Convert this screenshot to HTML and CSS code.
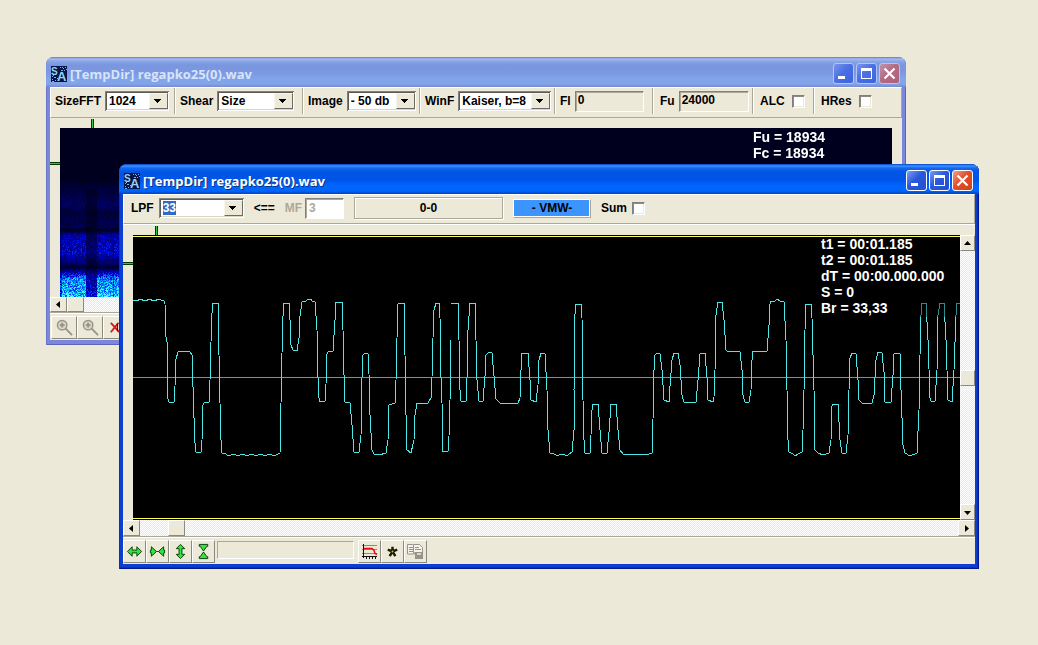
FILE: index.html
```
<!DOCTYPE html>
<html lang="en">
<head>
    <meta charset="UTF-8">
    <title>regapko25(0).wav</title>
    <link rel="stylesheet" href="styles.css">
</head>
<body>
    <svg class="defs" width="0" height="0" aria-hidden="true">
        <symbol id="logo" viewBox="0 0 16 16">
            <rect width="16" height="16" fill="#04164c"/>
            <path d="M9 1h1M12 2h1M14 1h1M10 4h2M13 4h1M1 10h1M3 11h2M1 13h1M4 14h1M6 12h1M1 15h2M11 1h1M15 3h1M2 9h1" transform="translate(0 .5)" stroke="#7fb3d8"/>
            <text x="0" y="9" class="logo-letter">S</text>
            <text x="6" y="15" class="logo-letter big">A</text>
        </symbol>
        <symbol id="min" viewBox="0 0 21 21"><path d="M5 13h7v3H5z" fill="#fff"/></symbol>
        <symbol id="max" viewBox="0 0 21 21"><path d="M5 5h11v11H5zM6 8v7h9V8z" fill="#fff" fill-rule="evenodd"/></symbol>
        <symbol id="close" viewBox="0 0 21 21"><path d="M5.500 5.500l10 10M15.500 5.500l-10 10" stroke="#fff" stroke-width="2.200"/></symbol>
    </svg>

    <div class="desktop">
        <div class="window spectrum inactive">
            <div class="titlebar">
                <svg class="logo"><use href="#logo"/></svg>
                <h1>[TempDir] regapko25(0).wav</h1>
                <button aria-label="Minimize"><svg><use href="#min"/></svg></button>
                <button aria-label="Maximize"><svg><use href="#max"/></svg></button>
                <button class="close" aria-label="Close"><svg><use href="#close"/></svg></button>
            </div>
            <div class="content">
                <div class="toolbar groups">
                    <div class="group">
                        <label for="sizefft">SizeFFT</label>
                        <span class="combo"><select id="sizefft"><option>1024</option></select></span>
                    </div>
                    <div class="group">
                        <label for="shear">Shear</label>
                        <span class="combo"><select id="shear"><option>Size</option></select></span>
                    </div>
                    <div class="group">
                        <label for="image">Image</label>
                        <span class="combo"><select id="image"><option>- 50 db</option></select></span>
                    </div>
                    <div class="group">
                        <label for="winf">WinF</label>
                        <span class="combo"><select id="winf"><option>Kaiser, b=8</option></select></span>
                    </div>
                    <div class="group">
                        <label for="fl">Fl</label>
                        <input type="text" class="field" id="fl" value="0">
                    </div>
                    <div class="group">
                        <label for="fu">Fu</label>
                        <input type="text" class="field" id="fu" value="24000">
                    </div>
                    <div class="group">
                        <label for="alc">ALC</label>
                        <input type="checkbox" id="alc">
                    </div>
                    <div class="group">
                        <label for="hres">HRes</label>
                        <input type="checkbox" id="hres">
                    </div>
                </div>
                <div class="view">
                    <div class="ruler-top"></div>
                    <div class="ruler-left"></div>
                    <div class="plot">
                        <canvas id="spectrogram"></canvas>
                        <div class="readout">
                            <p>Fu = 18934</p>
                            <p>Fc = 18934</p>
                        </div>
                    </div>
                </div>
                <div class="scroll horizontal">
                    <button aria-label="Scroll left"><svg viewBox="0 0 7 7"><path d="M5 0v7L1 3.500z"/></svg></button>
                    <span class="thumb"></span>
                </div>
                <div class="tools">
                    <button aria-label="Zoom in">
                        <svg viewBox="0 0 18 18"><circle cx="6.500" cy="6.500" r="5" fill="#d8d5c6" stroke="#96938a" stroke-width="1.500"/><path d="M4 6.500h5M6.500 4v5" stroke="#96938a" stroke-width="2"/><path d="M10 10l7 7" stroke="#96938a" stroke-width="2"/></svg>
                    </button>
                    <button aria-label="Zoom out">
                        <svg viewBox="0 0 18 18"><circle cx="6.500" cy="6.500" r="5" fill="#d8d5c6" stroke="#96938a" stroke-width="1.500"/><path d="M4 6.500h5M6.500 4v5" stroke="#96938a" stroke-width="2"/><path d="M10 10l7 7" stroke="#96938a" stroke-width="2"/></svg>
                    </button>
                    <button aria-label="Clear">
                        <svg viewBox="0 0 18 18"><path d="M3 4l9 10M11 4l-8 10" stroke="#d81818" stroke-width="2"/><path d="M10 5v8" stroke="#101010" stroke-width="1"/></svg>
                    </button>
                </div>
            </div>
        </div>

        <div class="window wave">
            <div class="titlebar">
                <svg class="logo"><use href="#logo"/></svg>
                <h1>[TempDir] regapko25(0).wav</h1>
                <button aria-label="Minimize"><svg><use href="#min"/></svg></button>
                <button aria-label="Maximize"><svg><use href="#max"/></svg></button>
                <button class="close" aria-label="Close"><svg><use href="#close"/></svg></button>
            </div>
            <div class="content">
                <div class="toolbar">
                    <div class="pair">
                        <label for="lpf">LPF</label>
                        <span class="combo lpf"><input type="text" id="lpf" value="33"></span>
                    </div>
                    <span>&lt;==</span>
                    <div class="pair mf">
                        <label for="mf">MF</label>
                        <input type="text" class="field" id="mf" value="3" disabled>
                    </div>
                    <output class="range">0-0</output>
                    <button class="vmw">- VMW-</button>
                    <div class="pair">
                        <label for="sum">Sum</label>
                        <input type="checkbox" id="sum">
                    </div>
                </div>
                <div class="view">
                    <div class="ruler-top"></div>
                    <div class="ruler-left"></div>
                    <div class="plot">
                        <svg class="signal" viewBox="133 235 827 285" preserveAspectRatio="none" shape-rendering="crispEdges">
                            <path d="M133 236.500h827M133 518.500h827" stroke="#ffff55"/>
                            <path d="M133 377.500h827" stroke="#8c8c84"/>
                            <polyline class="trace" points="133,300.500 138,300.500 139,299.500 142,299.500 143,300.500 147,300.500 148,299.500 151,299.500 152,300.500 156,300.500 157,299.500 160,299.500 162,300.500 164,301 165,304 165.500,335 167,342 167,375 168,399 169,402 174,402 175,386 176,359 178,352 181,351.500 190,352 192,355 193,387 194,418 195,443 196,452 201,452 202,440 203,405 204,403 209,402 210,380 211,342 212,313 213,303 218,303 219,355 220,403 221,440 222,453 226,454 227,455 231,455 232,454 235,454 236,455 240,455 241,454 244,454 245,455 249,455 250,454 253,454 254,455 258,455 259,454 262,454 263,455 267,455 268,454 271,454 272,455 276,455 278,454 280,453 281,403 282,353 283,316 284,303 289,303 290,320 291,345 293,350 297,351 299,338 300,316 302,302 306,301 308,299.500 311,299.500 312,301 315,302 317,330 318,378 319,398 320,402 325,401 326,384 327,354 328,352 333,351 335,320 336,302 342,302 343,330 344,375 345,402 350,403 352,425 354,452 359,452 361,435 362,378 363,355 365,353 368,354 369,374 370,415 372,450 374,454 379,455 386,453 388,440 389,405 395,403 396,380 397,338 398,304 404,303 405,355 406,415 407,450 411,453 414,440 415,415 417,403 428,403 431,398 432,377 433,338 434,310 436,303 439,303 440,318 441,378 442,403 443,451 448,451 449,436 450,400 451,340 451,304 458,303 459,340 460,390 461,401 466,401 467,378 468,330 470,303 475,303 476,340 477,380 479,401 483,401 485,376 486,355 489,352 492,353 494,376 496,399 500,403 518,403 520,398 521,370 522,353 528,353 530,380 531,400 536,402 538,385 539,360 541,353 545,354 547,390 548,430 550,453 554,454 556,455 559,455 560,454 564,454 565,455 568,455 569,454 572,452 574,430 574,390 575,314 576,304 581,304 582,318 583,400 584,440 585,453 590,453 591,435 592,410 593,404 598,404 600,430 602,453 607,453 609,432 611,404 616,404 618,430 620,450 623,454 626,455 630,454 636,455 640,454 646,455 652,453 653,419 654,370 655,355 657,353 660,354 662,370 664,400 669,402 670,386 672,360 674,353 678,353 680,365 682,395 684,402 690,403 696,402 698,380 700,354 705,353 707,378 708,400 713,402 714,397 715,370 716,315 718,302 722,302 724,320 726,350 727,351 740,352 742,370 743,395 745,402 749,402 751,390 752,360 753,351 767,351 769,325 770,304 771,301 775,301 777,299 780,301 784,302 786,340 787,390 788,440 789,452 793,454 795,456 798,454 802,452 803,430 804,390 805,330 806,304 811,304 812,318 814,390 815,450 818,453 823,455 829,453 831,440 832,406 833,404 838,404 840,440 842,453 846,453 848,435 849,390 850,358 852,353 856,354 858,380 859,400 862,403 872,403 874,395 876,360 878,352 882,353 884,372 885,402 891,402 893,375 894,354 900,353 901,390 903,445 905,453 910,456 917,453 919,410 920,355 921,315 922,303 926,303 928,340 930,398 931,401 935,401 937,370 938,315 940,303 944,303 946,340 948,400 952,402 954,370 956,315 957,303 960,303"/>
                            <rect x="917" y="240" width="43" height="77" opacity=".4"/>
                        </svg>
                        <div class="readout">
                            <p>t1 = 00:01.185</p>
                            <p>t2 = 00:01.185</p>
                            <p>dT = 00:00.000.000</p>
                            <p>S = 0</p>
                            <p>Br = 33,33</p>
                        </div>
                    </div>
                    <div class="scroll vertical">
                        <button aria-label="Scroll up"><svg viewBox="0 0 7 7"><path d="M0 5h7L3.500 1z"/></svg></button>
                        <span class="thumb"></span>
                        <button aria-label="Scroll down"><svg viewBox="0 0 7 7"><path d="M0 2h7L3.500 6z"/></svg></button>
                    </div>
                </div>
                <div class="scroll horizontal">
                    <button aria-label="Scroll left"><svg viewBox="0 0 7 7"><path d="M5 0v7L1 3.500z"/></svg></button>
                    <span class="thumb"></span>
                    <button aria-label="Scroll right"><svg viewBox="0 0 7 7"><path d="M2 0v7L6 3.500z"/></svg></button>
                </div>
                <div class="tools">
                    <button aria-label="Expand horizontally">
                        <svg viewBox="0 0 18 18" class="arrow"><path d="M1.500 9l5-5v3.500h5V4l5 5-5 5v-3.500h-5V14z"/></svg>
                    </button>
                    <button aria-label="Shrink horizontally">
                        <svg viewBox="0 0 18 18" class="arrow"><path d="M1.500 7.500h1V4l5.500 5-5.500 5v-3.500h-1zM16.500 7.500h-1V4L10 9l5.500 5v-3.500h1z"/><path d="M8 9h2"/></svg>
                    </button>
                    <button aria-label="Expand vertically">
                        <svg viewBox="0 0 18 18" class="arrow"><path d="M9 1.500l4.500 4.500h-3v6h3L9 16.500 4.500 12h3V6h-3z"/></svg>
                    </button>
                    <button aria-label="Shrink vertically">
                        <svg viewBox="0 0 18 18" class="arrow"><path d="M4.500 1.500h9v2h-1L9 8.500l-3.500-5h-1zM4.500 16.500h9v-2h-1L9 9.500l-3.500 5h-1z"/></svg>
                    </button>
                    <output class="status"></output>
                    <button aria-label="Filter response">
                        <svg viewBox="0 0 17 17"><path d="M1 2.500h15M1 6.500h15M1 10.500h15" stroke="#8c8a80"/><path d="M2.500 1v14M1 13.500h15M5.500 14v2M8.500 14v2M11.500 14v2M14.500 14v2" stroke="#111"/><path d="M3 5.500h8l2 2 1 3 2 1" fill="none" stroke="#e01010" stroke-width="1.500"/></svg>
                    </button>
                    <button aria-label="Mark">
                        <svg viewBox="0 0 18 18"><path d="M9 9V4M9 9l5-2M9 9l3 5M9 9l-3 5M9 9L4 7" stroke="#1a1a08" stroke-width="2.600"/><circle cx="9" cy="9" r="1" fill="#d0c000"/></svg>
                    </button>
                    <button aria-label="Copy" disabled>
                        <svg viewBox="0 0 17 17"><path d="M.5 1.500h5l2 2V11h-7z" fill="#f6f4ea" stroke="#96938a"/><path d="M6.500 1.500h6l3 3V10h-9z" fill="#f6f4ea" stroke="#96938a"/><path d="M2 4.500h4M2 6.500h4M2 8.500h4M8 4.500h4M8 6.500h6" stroke="#96938a"/><path d="M8 9h8v7H8z" fill="#96938a"/><path d="M10 10h4v2h-4z" fill="#d8d5c6"/></svg>
                    </button>
                </div>
            </div>
        </div>
    </div>
    <script src="script.js"></script>
</body>
</html>
```
FILE: styles.css
```
* {
    box-sizing: border-box;
}
body {
    margin: 0;
    background-color: #ece9d8;
    font: bold 12px/14px "Liberation Sans", Arial, sans-serif;
    color: #000;
}
button, input, select {
    font: inherit;
    color: inherit;
    margin: 0;
    padding: 0;
    border: 0;
    border-radius: 0;
    outline: 0;
}
.defs {
    position: absolute;
}
.desktop {
    position: relative;
    min-height: 100vh;
    min-width: 960px;
}

/* windows */
.window {
    position: absolute;
    padding: 0 4px 5px;
    border-radius: 8px 8px 0 0;
    background-color: #0c3fd0;
    box-shadow: inset 1px 0 #0831b8, inset -1px -1px #00188c, inset -2px -2px #0831b8;
}
.window.inactive {
    background-color: #7b86dc;
    box-shadow: inset 1px 0 #6a76cc, inset -1px -1px #5a66bc;
}
.spectrum {
    left: 46px;
    right: 132px;
    top: 57px;
}
.wave {
    left: 119px;
    right: 59px;
    top: 164px;
}
.titlebar {
    display: flex;
    align-items: center;
    gap: 2px;
    height: 30px;
    margin: 0 -4px;
    padding: 3px 6px 0 5px;
    border-radius: 8px 8px 0 0;
    background: linear-gradient(#0941c0 0, #3c92ff 2px, #1268f0 4px, #0054e3 8px, #0055e8 16px, #0066ff 22px, #0064fa 27px, #0340c0 30px);
    color: #fff;
}
.inactive .titlebar {
    background: linear-gradient(#6478c4 0, #a4bcf0 2px, #8ca6e8 4px, #7a96df 8px, #7c98e2 16px, #82a5ea 22px, #82a5ea 27px, #7888d0 30px);
    color: #d8e4f8;
}
.titlebar h1 {
    flex: 1;
    margin: 0 0 0 1px;
    font: bold 13px/18px "Open Sans", "Noto Sans", sans-serif;
    text-shadow: 1px 1px #0a3288;
}
.titlebar.titlebar h1 {
    white-space: nowrap;
}
.inactive .titlebar h1 {
    text-shadow: none;
}
.logo {
    width: 16px;
    height: 16px;
}
.logo-letter {
    font: bold 10px "Liberation Sans", sans-serif;
    fill: #9cd0ec;
}
.logo-letter.big {
    font-size: 13px;
}
.titlebar button {
    width: 21px;
    height: 21px;
    border: 1px solid #fff;
    border-radius: 3px;
    background: linear-gradient(135deg, #7c9cf0, #2a58dc 45%, #2450d0);
}
.titlebar button svg {
    display: block;
    width: 21px;
    height: 21px;
    margin: -1px;
}
.titlebar .close {
    background: linear-gradient(135deg, #f0a08c, #e0502c 45%, #d04018);
}
.inactive .titlebar button {
    border-color: #b4c4f4;
    background: linear-gradient(135deg, #7c94ec, #4a70e4 45%, #3c64dc);
}
.inactive .titlebar .close {
    background: linear-gradient(135deg, #c094ac, #b46c84 45%, #ac6078);
}
.content {
    background-color: #ece9d8;
}

/* toolbars */
.toolbar {
    display: flex;
    align-items: center;
    gap: 10px;
    height: 30px;
    padding: 0 7px 2px;
    border: 1px solid #aca899;
    border-top-color: #fff;
    border-left-color: #fff;
    box-shadow: 0 1px #fff;
}
.groups {
    display: grid;
    grid-template-columns: 124px 128px 117px 135px 98px 100px 61px 1fr;
    align-items: stretch;
    gap: 0;
    height: 31px;
    padding: 0;
    box-shadow: none;
}
.group, .pair {
    display: flex;
    align-items: center;
    gap: 5px;
}
.group {
    gap: 4px;
    height: 26px;
    padding: 0 5px 0 4px;
    border-right: 1px solid #aca899;
    box-shadow: 1px 0 #fff;
}
.group + .group {
    padding: 0 3px 0 5px;
}
.group:nth-child(2), .group:nth-child(5) {
    padding-right: 8px;
}
.group:nth-child(n+6) {
    padding-left: 7px;
}
.group:last-child {
    border: 0;
    box-shadow: none;
}
.group .combo, .group .field {
    flex: 1;
    width: 0;
}
.combo {
    display: flex;
    position: relative;
    height: 20px;
    padding: 2px;
    background-color: #fff;
    box-shadow: inset 1px 1px #808080, inset -1px -1px #fff, inset 2px 2px #5c5a54, inset -2px -2px #d8d5c6;
}
.combo select, .combo input {
    width: 100%;
    padding: 0 16px 0 2px;
    background-color: transparent;
    appearance: none;
}
/* arrow button drawn over the end of the combo */
.combo::after {
    content: "";
    position: absolute;
    top: 2px;
    right: 1px;
    bottom: 2px;
    width: 17px;
    border: 1px solid #6c6a62;
    border-top-color: #f8f6ec;
    border-left-color: #f8f6ec;
    background-color: #ece9d8;
    background-image: linear-gradient(#000, #000), linear-gradient(#000, #000), linear-gradient(#000, #000), linear-gradient(#000, #000);
    background-repeat: no-repeat;
    background-size: 7px 1px, 5px 1px, 3px 1px, 1px 1px;
    background-position: 4px 5px, 5px 6px, 6px 7px, 7px 8px;
    pointer-events: none;
}
.combo.lpf {
    width: 85px;
}
::selection {
    background-color: #316ac5;
    color: #fff;
}
.field {
    height: 21px;
    padding: 0 2px 2px;
    border: 1px solid #fff;
    border-top-color: #808080;
    border-left-color: #808080;
    background-color: #ece9d8;
    box-shadow: inset 1px 1px #aca899;
}
input[type="checkbox"] {
    appearance: none;
    width: 13px;
    height: 13px;
    border: 1px solid #fff;
    border-top-color: #808080;
    border-left-color: #808080;
    background-color: #fff;
    box-shadow: inset 1px 1px #8c8a80, inset -1px -1px #ece9d8;
}
.group input[type="checkbox"] {
    margin-left: 3px;
}
.mf {
    gap: 3px;
    color: #aca899;
}
.mf .field {
    width: 39px;
    padding: 0 3px;
    background-color: #fff;
}
.range {
    width: 149px;
    padding: 3px;
    border: 1px solid #aca899;
    box-shadow: inset 1px 1px #fff, 1px 1px #fff;
    text-align: center;
}
.vmw {
    width: 78px;
    height: 19px;
    border: 1px solid #aca899;
    border-top-color: #fff;
    border-left-color: #fff;
    background-color: #3c94ff;
    box-shadow: inset -1px -1px #fff;
}

/* plot area with the cursor rulers */
.view {
    display: grid;
    grid-template-columns: 10px 1fr 10px;
    grid-template-rows: 10px 1fr;
}
.wave .view {
    grid-template-columns: 10px 1fr 15px;
    grid-template-rows: 11px 1fr;
}
.ruler-top {
    grid-column: 1 / -1;
    background: linear-gradient(90deg, #003c00 1px, #30c840 1px, #30c840 2px, #003c00 2px) 41px 100% / 3px 9px no-repeat;
}
.wave .ruler-top {
    background-position: 32px 100%;
}
.ruler-left {
    background: linear-gradient(#003c00 1px, #30c840 1px, #30c840 2px, #003c00 2px) 0 34px / 10px 3px no-repeat;
}
.wave .ruler-left {
    background-position: 0 27px;
}
.plot {
    position: relative;
    background-color: #000;
}
.plot canvas, .signal {
    display: block;
    width: 100%;
    height: 169px;
}
.signal {
    height: 285px;
}
.trace {
    fill: none;
    stroke: #4ce8e8;
    vector-effect: non-scaling-stroke;
}
.readout {
    position: absolute;
    top: 1px;
    left: 693px;
    color: #fff;
    font-size: 14px;
    line-height: 16px;
    white-space: nowrap;
}
.wave .readout {
    left: 688px;
}
.readout p {
    margin: 0;
}

/* scroll bars */
.scroll {
    display: flex;
    background: repeating-conic-gradient(#fff 0 25%, #ece9d8 0 50%) 0 0 / 2px 2px;
}
.horizontal {
    height: 16px;
    border-bottom: 1px solid #aca899;
}
.wave .horizontal {
    height: 17px;
}
.vertical {
    flex-direction: column;
}
.scroll button, .thumb {
    flex: none;
    display: grid;
    place-items: center;
    width: 17px;
    height: 100%;
    border: 1px solid #8c8a80;
    border-top-color: #fff;
    border-left-color: #fff;
    background-color: #ece9d8;
}
.vertical button, .vertical .thumb {
    width: 15px;
    height: 16px;
}
.scroll svg {
    width: 7px;
    height: 7px;
}
.wave .horizontal .thumb {
    margin-left: 28px;
}
.vertical .thumb {
    margin-top: 119px;
}
.scroll button:last-child {
    margin-left: auto;
}
.vertical button:last-child {
    margin-top: auto;
}

/* bottom buttons */
.tools {
    display: flex;
    height: 27px;
    padding-top: 2px;
    border-top: 1px solid #fff;
    overflow: hidden;
}
.tools button {
    display: grid;
    place-items: center;
    width: 23px;
    height: 23px;
    border: 1px solid #8c8a80;
    border-top-color: #fff;
    border-left-color: #fff;
    background-color: #ece9d8;
}
.spectrum .tools {
    padding-left: 1px;
}
.spectrum .tools button {
    width: 26px;
}
.tools svg {
    width: 17px;
    height: 17px;
}
.arrow {
    fill: #2ee63c;
    stroke: #063c0a;
}
.status {
    width: 137px;
    height: 18px;
    margin: 1px 4px 0 2px;
    border: 1px solid #fff;
    border-top-color: #aca899;
    border-left-color: #aca899;
}
```
FILE: script.js
```
// noise level of each frequency row, top to bottom: [row, level]
var levels = [[0, 0.05], [50, 0.05], [76, 0.2], [84, 0.12], [98, 0.16], [102, 0.07], [107, 0.36], [124, 0.42], [134, 0.24], [139, 0.08], [143, 0.35], [150, 0.7], [169, 0.85]];
var seed = 7;

function random() {
    seed = (seed * 16807) % 2147483647;
    return seed / 2147483647;
}

function levelAt(y) {
    for (var i = 1; i < levels.length; i++) {
        if (y <= levels[i][0]) {
            var a = levels[i - 1], b = levels[i];
            return a[1] + (b[1] - a[1]) * (y - a[0]) / (b[0] - a[0]);
        }
    }
    return 0;
}

function drawSpectrogram() {
    var canvas = document.getElementById("spectrogram");
    canvas.width = canvas.clientWidth;
    canvas.height = canvas.clientHeight;
    var ctx = canvas.getContext("2d");
    var picture = ctx.createImageData(canvas.width, canvas.height);
    for (var y = 0; y < canvas.height; y++) {
        for (var x = 0; x < canvas.width; x++) {
            var v = levelAt(y);
            if (y > 60 && x > 25 && x < 37) {
                v *= 0.55;
            }
            if (y > 60 && (x < 2 || x == 53)) {
                v *= 0.7;
            }
            if (y > 50) {
                v *= 0.65 + random() * 0.7;
            }
            var p = (y * canvas.width + x) * 4;
            picture.data[p] = v > 0.85 ? (v - 0.85) * 350 : 0;
            picture.data[p + 1] = v > 0.45 ? (v - 0.45) * 480 : 0;
            picture.data[p + 2] = Math.min(255, 8 + v * 430);
            picture.data[p + 3] = 255;
        }
    }
    ctx.putImageData(picture, 0, 0);
}

window.onload = function() {
    drawSpectrogram();
    // current filter value is ready to be typed over
    var lpf = document.getElementById("lpf");
    lpf.focus();
    lpf.select();
};
```
